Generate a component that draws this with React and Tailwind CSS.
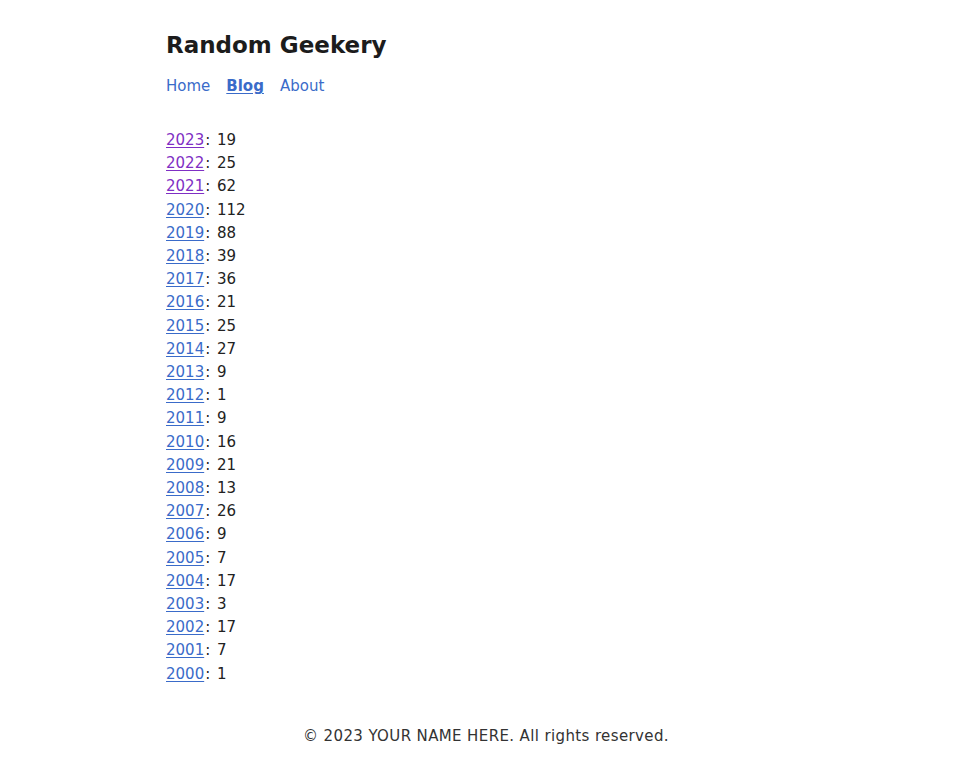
const YEARS = [
  [2023, 19, true],
  [2022, 25, true],
  [2021, 62, true],
  [2020, 112],
  [2019, 88],
  [2018, 39],
  [2017, 36],
  [2016, 21],
  [2015, 25],
  [2014, 27],
  [2013, 9],
  [2012, 1],
  [2011, 9],
  [2010, 16],
  [2009, 21],
  [2008, 13],
  [2007, 26],
  [2006, 9],
  [2005, 7],
  [2004, 17],
  [2003, 3],
  [2002, 17],
  [2001, 7],
  [2000, 1],
];

export default function App() {
  return (
    <div className="min-h-[768px] bg-white text-[#222] font-['DejaVu_Sans',Verdana,sans-serif] text-[15px]">
      <div className="mx-auto max-w-[640px] pt-[29px]">
        <h1 className="text-[23px] font-bold leading-[32px] text-[#1c1c1c]">Random Geekery</h1>
        <nav className="mt-[14px] flex gap-4 leading-[22px]">
          <a href="#" className="text-[#3a6bc9]">Home</a>
          <a href="#" className="font-bold text-[#3a6bc9] underline underline-offset-2">Blog</a>
          <a href="#" className="text-[#3a6bc9]">About</a>
        </nav>
        <ul className="mt-[32px] leading-[23.2px]">
          {YEARS.map(([year, count, visited]) => (
            <li key={year}>
              <a
                href="#"
                className={
                  visited
                    ? 'text-[#7f2fc4] underline underline-offset-2'
                    : 'text-[#3a6bc9] underline underline-offset-2'
                }
              >
                {year}
              </a>
              <span className="pl-[1px] pr-[2px]">:</span> {count}
            </li>
          ))}
        </ul>
      </div>
      <footer className="mt-[39px] text-center text-[#333] leading-[22px] tracking-[0.025em]">
        © 2023 YOUR NAME HERE. All rights reserved.
      </footer>
    </div>
  );
}
